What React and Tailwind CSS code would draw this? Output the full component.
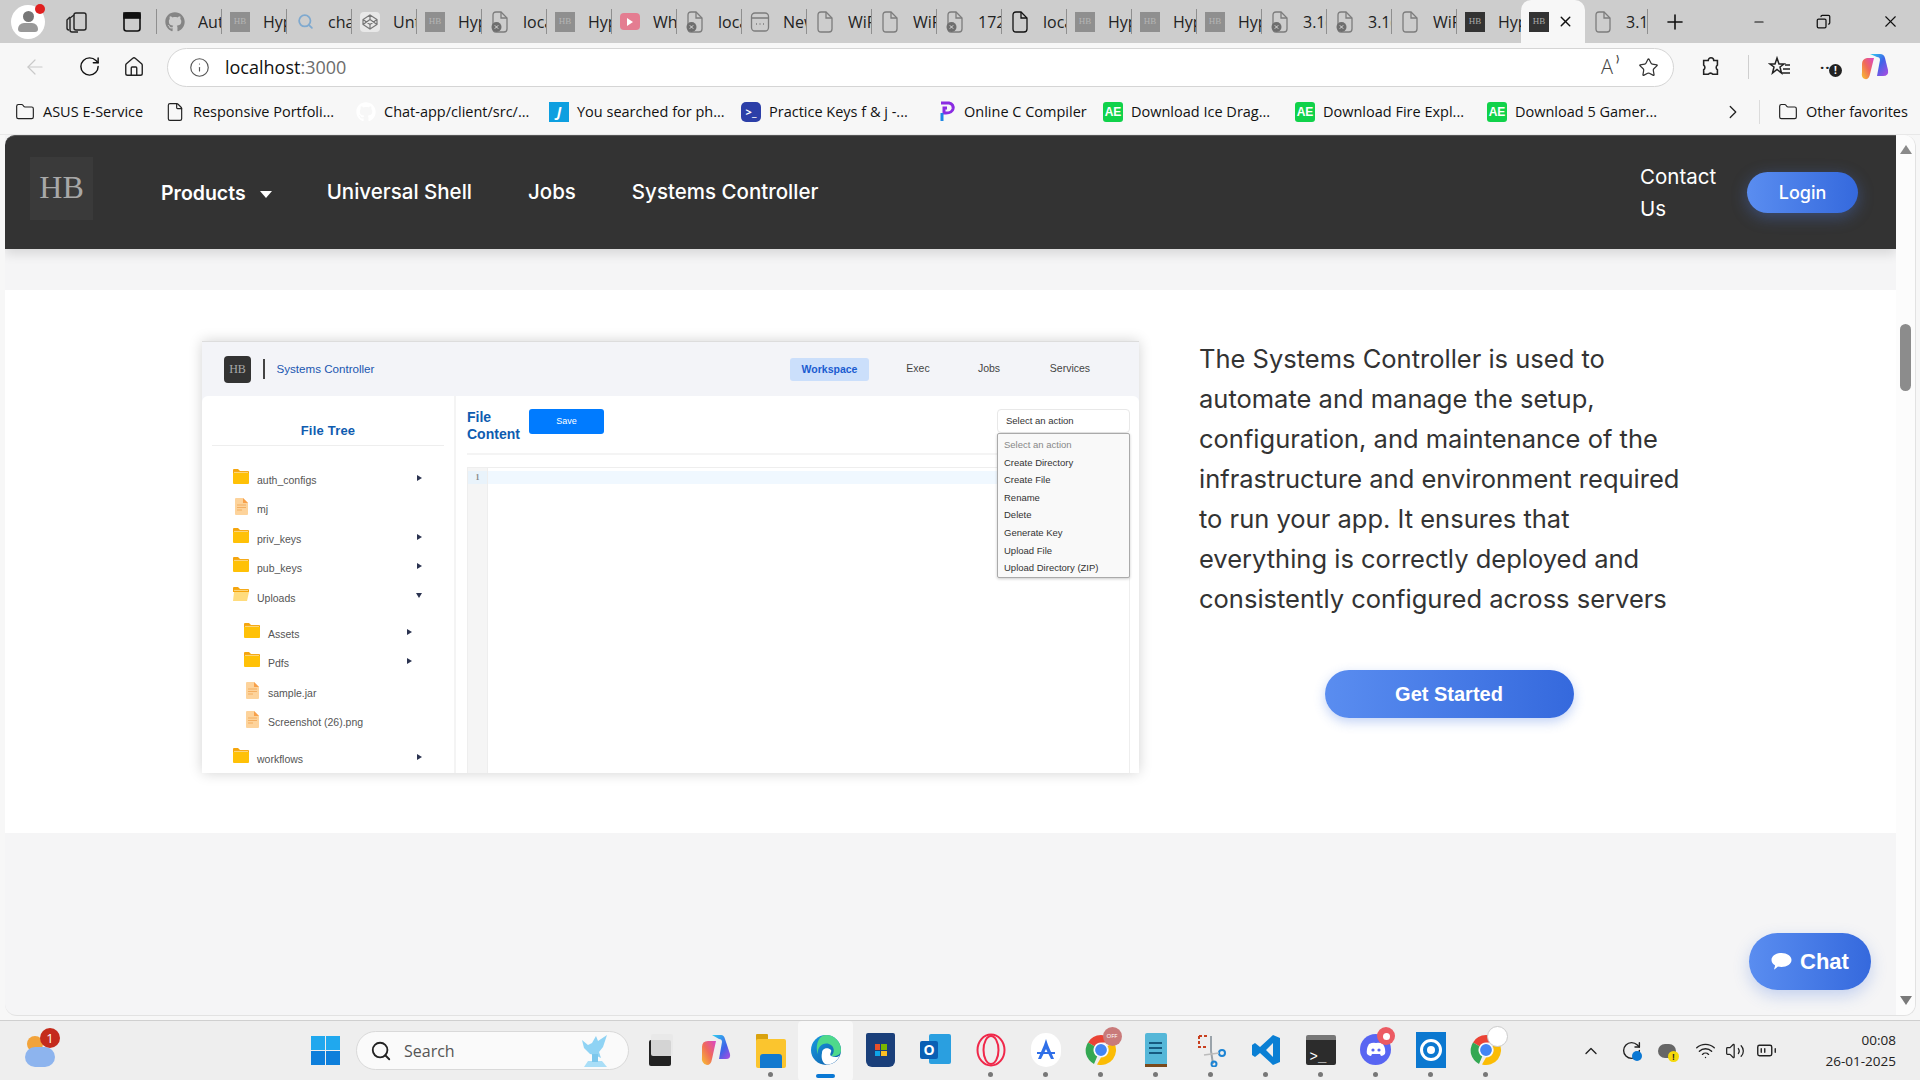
import {
  ArrowLeft, RotateCw, Home, Info, Star, ChevronRight, ChevronUp, Minus, X, Plus, Search,
  Wifi, Volume2, BatteryMedium, Folder as FolderLine, File as FileLine, Copy,
} from "lucide-react";
import { FaGithub } from "react-icons/fa";

const sans = "font-['Open_Sans','Noto_Sans',sans-serif]";
const poppins = "font-['Inter','Noto_Sans',sans-serif]";
const arial = "font-['Liberation_Sans',Arial,sans-serif]";

const tabs = [
  ["gh", "Aut"], ["hb", "Hyp"], ["search", "cha"], ["codepen", "Unt"], ["hb", "Hyp"], ["err", "loca"],
  ["hb", "Hyp"], ["yt", "Wh"], ["err", "loca"], ["new", "New"], ["doc", "WiFi"], ["doc", "WiFi"],
  ["err", "172"], ["docDark", "loca"], ["hb", "Hyp"], ["hb", "Hyp"], ["hb", "Hyp"], ["err", "3.1("],
  ["err", "3.1("], ["doc", "WiFi"], ["hbDark", "Hyp"],
];

function HbIcon({ dark }) {
  return (
    <div className={`w-5 h-5 flex items-center justify-center font-['Liberation_Serif',serif] text-[9px] ${dark ? "bg-[#333] text-[#aaa]" : "bg-[#8f8f8f] text-[#b5b5b5]"}`}>HB</div>
  );
}

function DocIcon({ color = "#7c7c7c", err }) {
  return (
    <svg width="20" height="24" viewBox="0 0 20 24" fill="none" stroke={color} strokeWidth="1.3">
      <path d="M3 5 Q3 2 6 2 H11 L17 8 V19 Q17 22 14 22 H6 Q3 22 3 19 Z" />
      <path d="M11 2 V8 H17" />
      {err && <circle cx="6.5" cy="17" r="5" fill="#6e6e6e" stroke="none" />}
      {err && <path d="M4.8 15.3 L8.2 18.7 M8.2 15.3 L4.8 18.7" stroke="#ddd" strokeWidth="1" />}
    </svg>
  );
}

function TabIcon({ kind }) {
  if (kind === "gh") return <FaGithub className="text-[#858585] text-[20px]" />;
  if (kind === "hb") return <HbIcon />;
  if (kind === "hbDark") return <HbIcon dark />;
  if (kind === "search") return <Search size={17} strokeWidth={2.5} className="text-[#7fa9cf]" />;
  if (kind === "err") return <DocIcon err />;
  if (kind === "doc") return <DocIcon />;
  if (kind === "docDark") return <DocIcon color="#111" />;
  if (kind === "codepen")
    return (
      <div className="w-5 h-5 rounded-sm bg-[#e8e8e8] flex items-center justify-center">
        <svg width="16" height="16" viewBox="0 0 16 16" fill="none" stroke="#777" strokeWidth="1.2">
          <path d="M8 1 L15 5.5 V10.5 L8 15 L1 10.5 V5.5 Z M8 1 V5.5 M8 10.5 V15 M1 5.5 L8 10.5 L15 5.5 M1 10.5 L8 5.5 L15 10.5" />
        </svg>
      </div>
    );
  if (kind === "yt")
    return (
      <div className="w-5 h-[17px] rounded-[4px] bg-[#e47d91] flex items-center justify-center">
        <div className="w-0 h-0 border-y-[4px] border-y-transparent border-l-[6px] border-l-white" />
      </div>
    );
  return (
    <svg width="20" height="22" viewBox="0 0 20 22" fill="none" stroke="#7c7c7c" strokeWidth="1.3">
      <rect x="1.5" y="2" width="17" height="18" rx="3.5" />
      <path d="M1.5 7 H18.5 M6 13 H7 M9.5 13 H10.5 M13 13 H14" />
    </svg>
  );
}

function Tab({ kind, label }) {
  return (
    <div className="w-[65px] h-[25px] shrink-0 flex items-center border-r border-[#8f8f8f] pl-2">
      <div className="w-5 flex justify-center shrink-0"><TabIcon kind={kind} /></div>
      <span className="ml-[13px] w-[23px] overflow-hidden whitespace-nowrap text-[16px] text-[#222]">{label}</span>
    </div>
  );
}

function TabStrip() {
  return (
    <div className={`h-[43px] bg-[#cdcdcd] flex items-center ${sans}`}>
      <div className="ml-[11px] relative w-[34px] h-[34px] rounded-full bg-white flex flex-col items-center justify-center shrink-0">
        <div className="w-[11px] h-[11px] rounded-full bg-[#777]" />
        <div className="w-[20px] h-[9px] rounded-t-[8px] rounded-b-[4px] bg-[#999] mt-[1px]" />
        <div className="absolute -top-[1px] right-0 w-[10px] h-[10px] rounded-full bg-[#e02020]" />
      </div>
      <svg className="ml-[20px] shrink-0" width="24" height="24" viewBox="0 0 24 24" fill="none" stroke="#222" strokeWidth="1.4">
        <rect x="9" y="3" width="12" height="17" rx="2" />
        <path d="M9 5 L5 8 V20 Q5 22 7 22 H13" />
        <path d="M5 7 L2 10 V18 Q2 20 4 20" />
      </svg>
      <svg className="ml-[32px] shrink-0" width="22" height="22" viewBox="0 0 22 22" fill="none" stroke="#111" strokeWidth="1.6">
        <rect x="3" y="2" width="16" height="18" rx="2.5" />
        <rect x="3" y="2" width="16" height="5" fill="#111" />
      </svg>
      <div className="ml-[13px] w-px h-[25px] bg-[#8f8f8f] shrink-0" />
      <div className="flex items-center">
        {tabs.map(([kind, label], i) => <Tab key={i} kind={kind} label={label} />)}
      </div>
      <div className="w-[64px] h-[43px] -ml-px bg-[#f7f7f7] rounded-t-[10px] shrink-0 flex items-center pl-2">
        <HbIcon dark />
        <X size={17} className="ml-[8px] text-[#111]" />
      </div>
      <div className="w-[63px] h-[25px] shrink-0 flex items-center border-r border-[#8f8f8f] pl-2">
        <div className="w-5 flex justify-center"><DocIcon /></div>
        <span className="ml-[13px] w-[23px] overflow-hidden whitespace-nowrap text-[16px] text-[#222]">3.1(</span>
      </div>
      <Plus size={24} strokeWidth={1.6} className="ml-[15px] text-[#111] shrink-0" />
      <div className="ml-auto flex items-center">
        <Minus size={14} className="text-[#111] mr-[50px]" />
        <Copy size={15} className="text-[#111] mr-[50px] -scale-x-100" />
        <X size={19} strokeWidth={1.4} className="text-[#111] mr-[20px]" />
      </div>
    </div>
  );
}

function Toolbar() {
  return (
    <div className={`h-[47px] bg-[#f7f7f7] flex items-center ${sans}`}>
      <ArrowLeft size={24} strokeWidth={1.2} className="ml-[23px] text-[#c9c9c9]" />
      <RotateCw size={23} strokeWidth={1.5} className="ml-[31px] text-[#111]" />
      <Home size={22} strokeWidth={1.5} className="ml-[22px] text-[#222]" />
      <div className="ml-[22px] w-[1507px] h-[39px] mt-[1px] rounded-full bg-white border border-[#d5d5d5] flex items-center pl-[21px]">
        <Info size={21} strokeWidth={1.3} className="text-[#555]" />
        <span className="ml-[15px] text-[18px] text-[#111] leading-none">localhost<span className="text-[#6d6d6d]">:3000</span></span>
        <span className="ml-auto relative text-[20px] font-light text-[#444] leading-none">A
          <span className="absolute -top-[3px] -right-[7px] text-[9px] font-bold">⟩</span>
        </span>
        <Star size={21} strokeWidth={1.4} className="ml-[25px] mr-[14px] text-[#333]" />
      </div>
      <svg className="ml-[26px]" width="22" height="24" viewBox="0 0 24 24" fill="none" stroke="#222" strokeWidth="1.7">
        <path d="M9 5 a3 3 0 0 1 6 0 h4 v5 a3 3 0 0 0 0 5 v5 h-5 a3 3 0 0 0 -5 0 h-5 v-5 a3 3 0 0 0 0 -5 v-5 z" />
      </svg>
      <div className="ml-[26px] w-px h-[24px] bg-[#cfcfcf]" />
      <svg className="ml-[19px]" width="24" height="24" viewBox="0 0 24 24" fill="none" stroke="#222" strokeWidth="1.5">
        <path d="M9 3 L11 9 H16 L12 12 L13.5 18 L9 14.5 L4.5 18 L6 12 L2 9 H7 Z" />
        <path d="M17 10 H22 M15 14 H22 M14 18 H22" />
      </svg>
      <div className="ml-[28px] relative w-[22px] h-[20px]">
        <span className="absolute left-0 top-[3px] text-[15px] font-bold leading-none text-[#222] tracking-[1px]">···</span>
        <div className="absolute right-0 bottom-0 w-[13px] h-[13px] rounded-full bg-[#222] text-white text-[10px] font-bold leading-[13px] text-center">!</div>
      </div>
      <svg className="ml-[18px]" width="30" height="30" viewBox="0 0 30 30">
        <defs>
          <linearGradient id="cp1" x1="0" y1="0" x2="1" y2="1">
            <stop offset="0" stopColor="#2fd0f0" /><stop offset="0.5" stopColor="#3f63e8" /><stop offset="1" stopColor="#b04ce0" />
          </linearGradient>
          <linearGradient id="cp2" x1="0" y1="1" x2="1" y2="0">
            <stop offset="0" stopColor="#f8c22e" /><stop offset="0.5" stopColor="#f06a5a" /><stop offset="1" stopColor="#d945c8" />
          </linearGradient>
        </defs>
        <path d="M10 2 H20 Q24 2 25 6 L28 18 Q29 24 23 24 H17 L20 8 Q20 5 17 5 Z" fill="url(#cp1)" />
        <path d="M2 12 Q2 7 7 6 H14 L10 22 Q9 28 5 27 Q1 26 2 20 Z" fill="url(#cp2)" />
      </svg>
    </div>
  );
}

function AeIcon() {
  return <div className={`w-5 h-5 rounded-[3px] bg-[#10d24a] text-white text-[12px] font-bold leading-5 text-center ${arial}`}>AE</div>;
}

const marks = [
  ["w-[150px]", <FolderLine key="a" size={20} strokeWidth={1.4} className="text-[#222]" />, "ASUS E-Service"],
  ["w-[191px]", <FileLine key="b" size={20} strokeWidth={1.4} className="text-[#222]" />, "Responsive Portfoli..."],
  ["w-[193px]", <FaGithub key="c" size={20} className="text-white" />, "Chat-app/client/src/..."],
  ["w-[192px]", <div key="d" className="w-5 h-5 bg-[#0d9fe0] text-white italic font-bold text-[14px] leading-5 text-center">J</div>, "You searched for ph..."],
  ["w-[195px]", <div key="e" className="w-5 h-5 rounded-[5px] bg-[#2c3fa8] text-white text-[11px] font-bold leading-5 text-center">&gt;_</div>, "Practice Keys f & j -..."],
  ["w-[167px]", <svg key="f" width="20" height="22" viewBox="0 0 20 22"><path d="M5 2 H13 Q18 3 17 8 Q16 12 10 12 L8 12 V7 L11 7" fill="none" stroke="#8a2be2" strokeWidth="3" /><path d="M6 12 V20" stroke="#1e88e5" strokeWidth="3" /></svg>, "Online C Compiler"],
  ["w-[192px]", <AeIcon key="g" />, "Download Ice Drag..."],
  ["w-[192px]", <AeIcon key="h" />, "Download Fire Expl..."],
  ["w-[235px]", <AeIcon key="i" />, "Download 5 Gamer..."],
];

function Bookmarks() {
  return (
    <div className={`h-[45px] bg-[#f7f7f7] border-b border-[#e8e8e8] flex items-center pl-[15px] text-[14.5px] text-[#111] ${sans}`}>
      {marks.map(([w, icon, label]) => (
        <div key={label} className={`${w} shrink-0 flex items-center gap-[8px] whitespace-nowrap`}>
          <div className="w-5 flex justify-center shrink-0">{icon}</div>
          <span>{label}</span>
        </div>
      ))}
      <ChevronRight size={22} strokeWidth={1.4} className="text-[#222] shrink-0" />
      <div className="ml-[15px] w-px h-[24px] bg-[#dcdcdc] shrink-0" />
      <div className="ml-[18px] flex items-center gap-[8px] whitespace-nowrap">
        <FolderLine size={20} strokeWidth={1.4} className="text-[#222]" />
        <span>Other favorites</span>
      </div>
    </div>
  );
}

function TreeFolder({ open }) {
  return (
    <svg width="16" height="15" viewBox="0 0 16 15" className="shrink-0">
      <path d="M0 1 Q0 0 1 0 H5 L7 2 H15 Q16 2 16 3 V5 H0 Z" fill="#f5a50d" />
      <path d={open ? "M1 5 H16 L14 14 H0 Z" : "M0 4 H16 V14 Q16 15 15 15 H1 Q0 15 0 14 Z"} fill={open ? "#ffdc7d" : "#ffc107"} />
      <path d="M1 3.4 H15" stroke="#ffe9a8" strokeWidth="0.8" />
    </svg>
  );
}

function TreeFile() {
  return (
    <svg width="13" height="17" viewBox="0 0 13 17" className="shrink-0">
      <path d="M1 0 H8 L13 5 V16 Q13 17 12 17 H1 Q0 17 0 16 V1 Q0 0 1 0 Z" fill="#fdd39b" />
      <path d="M8 0 L13 5 H8 Z" fill="#f7a04a" />
      <path d="M2 7 H11 M2 9.5 H11 M2 12 H7" stroke="#f2a95a" strokeWidth="0.9" />
    </svg>
  );
}

function Caret({ down }) {
  return down
    ? <div className="w-0 h-0 border-x-[3px] border-x-transparent border-t-[5px] border-t-[#2b3350]" />
    : <div className="w-0 h-0 border-y-[3px] border-y-transparent border-l-[5px] border-l-[#2b3350]" />;
}

function TreeRow({ name, file, open, nested }) {
  return (
    <div className={`h-[29.4px] flex items-start ${nested ? "pl-[32px] pr-[32px]" : "pl-[21px] pr-[22px]"}`}>
      <div className="w-[16px] flex justify-center mt-[1px]">{file ? <TreeFile /> : <TreeFolder open={open} />}</div>
      <span className="ml-[8px] mt-[6px] text-[10.5px] leading-[13px] text-[#555] whitespace-nowrap">{name}</span>
      {!file && <div className="ml-auto mt-[7px]"><Caret down={open} /></div>}
    </div>
  );
}

const actions = ["Create Directory", "Create File", "Rename", "Delete", "Generate Key", "Upload File", "Upload Directory (ZIP)"];

function Mockup() {
  return (
    <div className={`w-[937px] h-[432px] shrink-0 bg-[#f3f4f8] border-t border-[#ddd] shadow-[0_0_14px_rgba(0,0,0,0.18)] rounded-b-[3px] flex flex-col ${arial}`}>
      <div className="h-[54px] flex items-center pl-[22px] shrink-0">
        <div className="w-[27px] h-[27px] rounded-[4px] bg-[#333] text-[#aaa] text-[12px] leading-[27px] text-center font-['Liberation_Serif',serif]">HB</div>
        <div className="ml-[12px] w-[1.5px] h-[20px] bg-[#444]" />
        <span className="ml-[12px] text-[11.6px] text-[#1a56b0]">Systems Controller</span>
        <div className="ml-auto flex items-center text-[10.5px] text-[#444]">
          <div className="w-[79px] h-[23px] rounded-[3px] bg-[#cbdffb] text-[#1a5cd0] font-bold leading-[23px] text-center">Workspace</div>
          <span className="w-[98px] text-center">Exec</span>
          <span className="w-[44px] text-center">Jobs</span>
          <span className="w-[116px] text-center pl-[2px]">Services</span>
          <div className="w-[12px]" />
        </div>
      </div>
      <div className="flex-1 min-h-0 bg-white rounded-t-[6px] flex">
        <div className="w-[254px] shrink-0 border-r-2 border-[#f4f4f4] px-[10px] flex flex-col overflow-hidden">
          <div className="h-[50px] border-b border-[#eee] shrink-0 text-center text-[13px] font-bold text-[#0f5cb0] pt-[27px] leading-[15px] tracking-[0.2px]">File Tree</div>
          <div className="pt-[22px]">
            <TreeRow name="auth_configs" />
            <TreeRow name="mj" file />
            <TreeRow name="priv_keys" />
            <TreeRow name="pub_keys" />
            <TreeRow name="Uploads" open />
            <div className="pt-[7px] pb-[7px]">
              <TreeRow name="Assets" nested />
              <TreeRow name="Pdfs" nested />
              <TreeRow name="sample.jar" nested file />
              <TreeRow name="Screenshot (26).png" nested file />
            </div>
            <TreeRow name="workflows" />
          </div>
        </div>
        <div className="flex-1 min-w-0 pl-[11px] pr-[9px] flex flex-col relative">
          <div className="h-[59px] shrink-0 border-b-2 border-[#f4f4f4] flex items-start justify-between pt-[13px]">
            <div className="flex items-start">
              <div className="w-[57px] text-[14px] font-bold leading-[17px] text-[#0f5cb0]">File Content</div>
              <div className="ml-[5px] -mt-[0px] w-[75px] h-[25px] rounded-[3px] bg-[#007bff] text-white text-[9px] leading-[25px] text-center">Save</div>
            </div>
            <div className="w-[133px] h-[24px] rounded-[4px] border border-[#e8e8e8] text-[9.5px] text-[#333] leading-[22px] pl-[8px]">Select an action</div>
          </div>
          <div className="mt-[12px] flex-1 border border-[#eee] border-b-0 flex">
            <div className="w-[20px] bg-[#f5f5f5] border-r border-[#eee] shrink-0">
              <div className="mt-[3px] h-[13px] bg-[#e9f3fb] text-[8px] leading-[13px] text-center font-bold text-[#888] font-['Liberation_Serif',serif]">1</div>
            </div>
            <div className="flex-1"><div className="mt-[3px] h-[13px] bg-[#f0f8ff]" /></div>
          </div>
          <div className="absolute top-[37px] right-[9px] w-[133px] h-[145px] bg-[#f9f9f9] border border-[#aaa] rounded-[2px] shadow-[0_1px_3px_rgba(0,0,0,0.2)] pl-[6px] pt-[2px] text-[9.5px] text-[#333]">
            <div className="h-[17.6px] leading-[17.6px] text-[#888]">Select an action</div>
            {actions.map((a) => <div key={a} className="h-[17.6px] leading-[17.6px]">{a}</div>)}
          </div>
        </div>
      </div>
    </div>
  );
}

function Page() {
  return (
    <div className="relative h-[881px] ml-[5px] mr-[4px] rounded-b-[12px] rounded-tr-[12px] bg-[#f5f5f6] border-b border-r border-[#e2e2e2] flex overflow-hidden">
      <div className="flex-1 min-w-0 flex flex-col">
        <div className={`h-[114px] shrink-0 bg-[#333] rounded-tl-[10px] border-t border-[#555] shadow-[0_5px_12px_rgba(0,0,0,0.12)] flex items-center pl-[25px] pr-[38px] text-white ${poppins}`}>
          <div className="w-[63px] h-[63px] mb-[9px] bg-[#3a3a3a] text-[#a8a8a8] text-[32px] leading-[60px] text-center font-['Liberation_Serif',serif]">HB</div>
          <div className="ml-[68px] mt-[3px] flex items-center text-[19.5px] font-semibold">
            Products
            <div className="ml-[14px] w-0 h-0 border-x-[6px] border-x-transparent border-t-[7px] border-t-white" />
          </div>
          <span className="ml-[55px] text-[20.5px] font-medium">Universal Shell</span>
          <span className="ml-[56px] text-[20.5px] font-medium">Jobs</span>
          <span className="ml-[56px] text-[20.5px] font-medium">Systems Controller</span>
          <div className="ml-auto w-[107px] text-[20.5px] leading-[32px] font-normal">Contact Us</div>
          <div className="w-[111px] h-[41px] rounded-full bg-gradient-to-r from-[#5a8df0] to-[#3569dd] shadow-[0_4px_16px_rgba(80,130,240,0.35)] text-[18px] font-medium leading-[41px] text-center">Login</div>
        </div>
        <div className="h-[41px] shrink-0" />
        <div className="h-[543px] shrink-0 bg-white flex items-start pl-[197px] pt-[51px]">
          <Mockup />
          <div className="ml-[60px] w-[500px] -mt-[2px] flex flex-col items-center">
            <p className={`w-full text-[25.5px] leading-[40px] text-[#333] ${poppins}`}>
              The Systems Controller is used to automate and manage the setup, configuration, and maintenance of the infrastructure and environment required to run your app. It ensures that everything is correctly deployed and consistently configured across servers
            </p>
            <div className={`mt-[51px] w-[249px] h-[48px] rounded-full bg-gradient-to-r from-[#5a8df0] to-[#3569dd] shadow-[0_4px_12px_rgba(53,105,221,0.3)] text-white text-[20px] font-bold leading-[48px] text-center ${arial}`}>Get Started</div>
          </div>
        </div>
      </div>
      <div className="w-[19px] shrink-0 bg-[#fcfcfc] flex flex-col items-center">
        <div className="mt-[10px] w-0 h-0 border-x-[6px] border-x-transparent border-b-[9px] border-b-[#8a8a8a]" />
        <div className="mt-[170px] w-[11px] h-[67px] rounded-full bg-[#8c8c8c]" />
        <div className="mt-auto mb-[10px] w-0 h-0 border-x-[6px] border-x-transparent border-t-[9px] border-t-[#7a7a7a]" />
      </div>
      <div className={`absolute left-[1744px] top-[798px] w-[122px] h-[57px] rounded-full bg-gradient-to-r from-[#5a8df0] to-[#3569dd] shadow-[0_6px_16px_rgba(53,105,221,0.25)] text-white text-[22px] font-bold flex items-center justify-center gap-[8px] ${arial}`}>
        <svg width="21" height="19" viewBox="0 0 21 19"><path d="M10.5 1 C16 1 20.5 4 20.5 8 C20.5 12 16 15 10.5 15 C9 15 8 14.9 7 14.6 C5.5 16 3.5 17.5 3 17.5 C3.5 16 4 14.5 4 13.3 C1.8 12 0.5 10 0.5 8 C0.5 4 5 1 10.5 1 Z" fill="#fff" /></svg>
        Chat
      </div>
    </div>
  );
}

function TaskIcon({ children, dot, active }) {
  return (
    <div className={`relative w-[55px] h-[60px] shrink-0 flex items-center justify-center pb-[2px] ${active ? "bg-[#f8f8f8] rounded-[4px]" : ""}`}>
      {children}
      {dot && <div className="absolute bottom-[4px] left-[25px] w-[5px] h-[5px] rounded-full bg-[#777]" />}
      {active && <div className="absolute bottom-[3px] left-[18px] w-[19px] h-[4px] rounded-full bg-[#0a78d4]" />}
    </div>
  );
}

function ChromeLogo() {
  return (
    <svg width="32" height="32" viewBox="0 0 32 32">
      <path d="M16 1 A15 15 0 0 1 29 8.5 H16 A7.5 7.5 0 0 0 9.5 12.2 L3 8.5 A15 15 0 0 1 16 1 Z" fill="#ea4335" />
      <path d="M3 8.5 L9.5 12.2 A7.5 7.5 0 0 0 12.2 22.5 L9 30 A15 15 0 0 1 3 8.5 Z" fill="#34a853" />
      <path d="M29 8.5 A15 15 0 0 1 12 30.5 L16 23.5 A7.5 7.5 0 0 0 22.5 12 Z" fill="#fbbc05" />
      <circle cx="16" cy="16" r="6.5" fill="#4285f4" stroke="#fff" strokeWidth="1.2" />
    </svg>
  );
}

function Taskbar() {
  return (
    <div className={`h-[60px] mt-[4px] bg-[#eeeeee] border-t border-[#cfcfcf] flex items-center ${sans}`}>
      <div className="relative ml-[25px] w-[32px] h-[32px] shrink-0 mt-[2px]">
        <div className="absolute left-[2px] top-0 w-[16px] h-[16px] rounded-full bg-[#f2a33a]" />
        <div className="absolute left-0 top-[11px] w-[30px] h-[20px] rounded-[10px] bg-[#8db4ee]" />
        <div className="absolute left-[15px] -top-[8px] w-[20px] h-[20px] rounded-full bg-[#c42b1c] text-white text-[13px] leading-[20px] text-center">1</div>
      </div>
      <div className="ml-[254px] grid grid-cols-2 gap-[1px] w-[29px] h-[29px] shrink-0">
        <div className="bg-[#20a8ee]" /><div className="bg-[#20a8ee]" /><div className="bg-[#0e7fdb]" /><div className="bg-[#0e7fdb]" />
      </div>
      <div className="ml-[16px] w-[273px] h-[39px] rounded-full bg-[#fafafa] border border-[#d9d9d9] flex items-center pl-[13px] shrink-0">
        <Search size={22} strokeWidth={2} className="text-[#222]" />
        <span className="ml-[12px] text-[16px] text-[#555]">Search</span>
        <svg className="ml-auto mr-[18px]" width="32" height="34" viewBox="0 0 32 34">
          <path d="M6 14 L4 6 L10 11 L14 9 L18 2 L20 7 L29 1 L25 13 L21 18 L23 24 L17 21 L12 20 L8 16 Z" fill="#8fd3f4" />
          <path d="M6 33 L10 27 H24 L29 33 Z" fill="#a9def7" />
          <rect x="14" y="20" width="6" height="8" fill="#7cc7ec" />
        </svg>
      </div>
      <div className="ml-[4px] flex items-center">
        <TaskIcon>
          <div className="relative w-[24px] h-[32px]">
            <div className="absolute left-0 bottom-0 w-[22px] h-[26px] bg-[#222] rounded-[2px]" />
            <div className="absolute right-0 top-0 w-[22px] h-[22px] bg-[#e8e8e8]/90 rounded-[2px]" />
          </div>
        </TaskIcon>
        <TaskIcon>
          <svg width="30" height="32" viewBox="0 0 30 32">
            <defs>
              <linearGradient id="tb1" x1="0" y1="0" x2="1" y2="1"><stop offset="0" stopColor="#2fd0f0" /><stop offset="0.6" stopColor="#3f63e8" /><stop offset="1" stopColor="#b04ce0" /></linearGradient>
              <linearGradient id="tb2" x1="0" y1="1" x2="1" y2="0"><stop offset="0" stopColor="#f8c22e" /><stop offset="0.5" stopColor="#f06a5a" /><stop offset="1" stopColor="#d945c8" /></linearGradient>
            </defs>
            <path d="M11 1 H20 Q23 1 24 5 L29 20 Q30 25 25 25 H18 L21 8 Q21 5 18 5 Z" fill="url(#tb1)" />
            <path d="M1 13 Q1 7 7 7 H15 L11 25 Q10 31 6 31 Q0 30 1 22 Z" fill="url(#tb2)" />
          </svg>
        </TaskIcon>
        <TaskIcon dot>
          <div className="w-[30px] h-[34px] mt-[2px] relative">
            <div className="absolute left-0 top-0 w-[12px] h-[8px] bg-[#d9a20e] rounded-t-[1px]" />
            <div className="absolute inset-x-0 top-[5px] bottom-0 bg-[#fbc52e] rounded-[2px]" />
            <div className="absolute left-[4px] right-[4px] bottom-0 h-[14px] bg-[#1279cf] rounded-t-[3px]" />
          </div>
        </TaskIcon>
        <TaskIcon active>
          <svg width="32" height="32" viewBox="0 0 32 32">
            <defs>
              <linearGradient id="edge" x1="0" y1="0" x2="1" y2="1"><stop offset="0" stopColor="#1a9be0" /><stop offset="1" stopColor="#0c5aa8" /></linearGradient>
            </defs>
            <circle cx="16" cy="16" r="15" fill="url(#edge)" />
            <path d="M16 1 A15 15 0 0 1 31 16 C31 21 26 23 21 22 C25 19 25 12 19 10 C13 8 7 13 8 20 C5 13 8 1 16 1 Z" fill="#4ed98b" />
            <path d="M12 19 C12 14 18 13 21 16 C22 18 19 20 21 22 C25 24 29 23 30 21 C27 28 20 32 15 30 C12 28 11 23 12 19 Z" fill="#fff" />
          </svg>
        </TaskIcon>
        <TaskIcon>
          <div className="relative w-[29px] h-[34px] mt-[1px] bg-[#1a3f7a] rounded-b-[6px] rounded-t-[2px] flex items-center justify-center">
            <div className="grid grid-cols-2 gap-[1px] w-[12px] h-[12px]">
              <div className="bg-[#e8502a]" /><div className="bg-[#7ab800]" /><div className="bg-[#0ea5e9]" /><div className="bg-[#fbbf24]" />
            </div>
          </div>
        </TaskIcon>
        <TaskIcon>
          <div className="relative w-[31px] h-[31px]">
            <div className="absolute right-0 top-0 w-[22px] h-[30px] bg-[#2a9fe0] rounded-[2px]" />
            <div className="absolute left-0 top-[7px] w-[18px] h-[18px] bg-[#0a5fb4] rounded-[2px] text-white text-[14px] font-bold leading-[18px] text-center">O</div>
          </div>
        </TaskIcon>
        <TaskIcon dot>
          <svg width="30" height="34" viewBox="0 0 30 34" fill="none" stroke="#f0284a" strokeWidth="2">
            <ellipse cx="15" cy="17" rx="13.5" ry="15.5" />
            <ellipse cx="15" cy="17" rx="7.5" ry="14" />
          </svg>
        </TaskIcon>
        <TaskIcon dot>
          <div className="w-[30px] h-[34px] rounded-full bg-white flex items-center justify-center">
            <svg width="20" height="24" viewBox="0 0 20 24" fill="#2f6fe8">
              <path d="M10 1 L12 7 L18 21 L15 21 L10 11 L5 21 L2 21 L8 7 Z" />
              <rect x="1" y="14" width="18" height="2" />
            </svg>
          </div>
        </TaskIcon>
        <TaskIcon dot>
          <div className="relative"><ChromeLogo /><div className="absolute -top-[7px] right-[-5px] w-[19px] h-[19px] rounded-full bg-[#c97a7a] text-[6px] leading-[19px] text-center text-white">OFF</div></div>
        </TaskIcon>
        <TaskIcon dot>
          <div className="w-[22px] h-[34px] bg-[#55b7d8] rounded-t-[2px] border-b-[3px] border-[#7a4a1c] flex flex-col items-center justify-center gap-[3px]">
            <div className="w-[13px] h-[2px] bg-[#175a80]" /><div className="w-[13px] h-[2px] bg-[#175a80]" /><div className="w-[13px] h-[2px] bg-[#175a80]" />
          </div>
        </TaskIcon>
        <TaskIcon dot>
          <svg width="30" height="34" viewBox="0 0 30 34" fill="none">
            <path d="M3 3 H12 M3 3 V14 H10" stroke="#c8401f" strokeWidth="2" strokeDasharray="3 2" />
            <path d="M15 3 V18 L17 31" stroke="#9aa3aa" strokeWidth="2" />
            <circle cx="26" cy="20" r="3" stroke="#1d84d4" strokeWidth="2" />
            <circle cx="18" cy="31" r="2.5" stroke="#1d84d4" strokeWidth="2" />
            <path d="M8 22 L23 20" stroke="#bbb" strokeWidth="1.5" />
          </svg>
        </TaskIcon>
        <TaskIcon dot>
          <svg width="30" height="32" viewBox="0 0 30 32">
            <path d="M22 1 L29 4 V28 L22 31 L9 19 L4 23 L1 21 V11 L4 9 L9 13 Z M22 9 L15 16 L22 23 Z" fill="#0a7fd4" />
          </svg>
        </TaskIcon>
        <TaskIcon dot>
          <div className="w-[30px] h-[30px] rounded-[2px] bg-[#2c2c2c] text-white text-[14px] leading-[34px] pl-[4px] font-['Liberation_Mono',monospace] border-t-[5px] border-[#777]">&gt;_</div>
        </TaskIcon>
        <TaskIcon dot>
          <div className="relative w-[31px] h-[31px] rounded-full bg-[#5865f2] flex items-center justify-center">
            <svg width="20" height="15" viewBox="0 0 20 15" fill="#fff"><path d="M3 2 Q7 0 10 1 Q13 0 17 2 Q20 7 19 12 Q17 14 15 14 L14 12 H6 L5 14 Q3 14 1 12 Q0 7 3 2 Z" /><circle cx="7" cy="8" r="1.6" fill="#5865f2" /><circle cx="13" cy="8" r="1.6" fill="#5865f2" /></svg>
            <div className="absolute -top-[7px] -right-[4px] w-[18px] h-[18px] rounded-full bg-[#ec5b63] flex items-center justify-center"><div className="w-[7px] h-[7px] rounded-full bg-white" /></div>
          </div>
        </TaskIcon>
        <TaskIcon dot>
          <div className="w-[30px] h-[36px] bg-[#0b78d0] flex items-center justify-center">
            <div className="w-[22px] h-[22px] rounded-full border-[3px] border-white flex items-center justify-center"><div className="w-[8px] h-[8px] rounded-full bg-white" /></div>
          </div>
        </TaskIcon>
        <TaskIcon dot>
          <div className="relative"><ChromeLogo /><div className="absolute -top-[8px] right-[-6px] w-[21px] h-[21px] rounded-full bg-white border border-[#ccc]" /></div>
        </TaskIcon>
      </div>
      <div className="ml-[92px] flex items-center text-[#222]">
        <ChevronUp size={20} strokeWidth={1.6} className="-ml-[24px]" />
        <div className="relative ml-[20px]">
          <RotateCw size={21} strokeWidth={1.6} />
          <div className="absolute right-0 bottom-0 w-[10px] h-[10px] rounded-full bg-[#0a78d4]" />
        </div>
        <div className="relative ml-[16px]">
          <div className="w-[18px] h-[14px] rounded-[7px] bg-[#666]" />
          <div className="absolute -right-[3px] -bottom-[4px] w-[11px] h-[11px] rounded-full bg-[#f5d90a] text-[8px] leading-[11px] text-center font-bold">!</div>
        </div>
        <Wifi size={21} strokeWidth={1.6} className="ml-[19px]" />
        <Volume2 size={20} strokeWidth={1.5} className="ml-[9px]" />
        <BatteryMedium size={21} strokeWidth={1.6} className="ml-[11px]" />
      </div>
      <div className="ml-auto mr-[24px] text-right text-[13.5px] leading-[21px] text-[#222]">
        <div>00:08</div>
        <div>26-01-2025</div>
      </div>
    </div>
  );
}

export default function App() {
  return (
    <div className="w-[1920px] h-[1080px] overflow-hidden bg-[#f7f7f7] flex flex-col">
      <TabStrip />
      <Toolbar />
      <Bookmarks />
      <Page />
      <Taskbar />
    </div>
  );
}
